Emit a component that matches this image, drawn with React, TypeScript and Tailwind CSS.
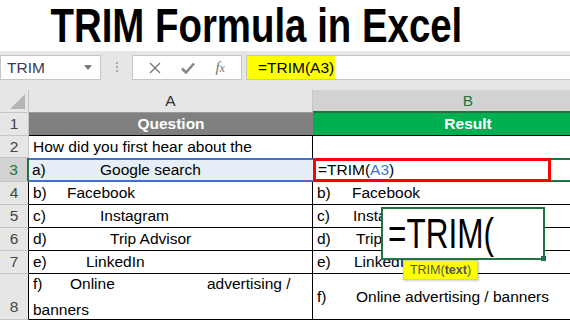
import React from "react";

const cellFont = { fontFamily: '"Liberation Sans", Arial, sans-serif' };

// one left/right item: label in a fixed-width slot, text after it
const Item = ({ label, w, text }: { label: string; w: string; text: string }) => (
  <div className="flex items-center whitespace-nowrap">
    <span className={w}>{label}</span>
    <span>{text}</span>
  </div>
);

const RowHead = ({
  n,
  border = "border-r-[#c6c6c6]",
  text = "text-[#444]",
  align = "items-center",
  bg = "bg-[#e6e6e6]",
}: {
  n: string;
  border?: string;
  text?: string;
  align?: string;
  bg?: string;
}) => (
  <div
    className={`flex w-[29px] shrink-0 justify-center border-b border-r border-b-[#c6c6c6] ${border} ${bg} ${text} ${align}`}
  >
    {n}
  </div>
);

export default function App() {
  return (
    <div
      className="relative h-[322px] w-[570px] overflow-hidden bg-white text-[15.5px] text-black"
      style={cellFont}
    >
      {/* title */}
      <div className="flex h-[51px] items-center justify-center pr-[57px]">
        <h1 className="scale-x-[0.8] whitespace-nowrap text-[48px] font-bold leading-none text-black">
          TRIM Formula in Excel
        </h1>
      </div>

      {/* formula bar */}
      <div className="flex h-[39px] items-start bg-[#e6e6e6] pt-[4px]">
        <div className="flex h-[25px] w-[101px] items-center justify-between border border-[#c6c6c6] bg-white pl-[6px] pr-[8px] text-[#3a3a55]">
          <span>TRIM</span>
          <svg width="8" height="5" viewBox="0 0 8 5">
            <path d="M0 0h8L4 5z" fill="#777" />
          </svg>
        </div>
        <div className="flex w-[31px] flex-col items-center gap-[2px] pt-[7px]">
          <span className="h-[2px] w-[2px] bg-[#aaa]" />
          <span className="h-[2px] w-[2px] bg-[#aaa]" />
          <span className="h-[2px] w-[2px] bg-[#aaa]" />
        </div>
        <div className="flex h-[25px] w-[110px] items-center justify-around border border-[#c6c6c6] bg-white px-[6px]">
          <svg width="12" height="12" viewBox="0 0 12 12">
            <path d="M1 1l10 10M11 1L1 11" stroke="#777" strokeWidth="1.4" />
          </svg>
          <svg width="14" height="12" viewBox="0 0 14 12">
            <path d="M1 6.5l4 4L13 1.5" stroke="#888" strokeWidth="2.6" fill="none" />
          </svg>
          <span className="text-[15px] italic text-[#777] [font-family:'Liberation_Serif',serif]">
            f<span className="text-[12px]">x</span>
          </span>
        </div>
        <div className="ml-[4px] flex h-[25px] flex-1 items-center border-y border-l border-[#c6c6c6] bg-white">
          <div className="flex h-full w-[88px] items-center bg-[#ffff00] pl-[11px]">=TRIM(A3)</div>
        </div>
      </div>

      {/* column headers */}
      <div className="flex h-[23px]">
        <div className="relative w-[29px] shrink-0 border-b border-r border-[#c6c6c6] bg-[#e6e6e6]">
          <svg className="absolute bottom-[3px] right-[3px]" width="15" height="15" viewBox="0 0 15 15">
            <path d="M15 0V15H0z" fill="#b5b5b5" />
          </svg>
        </div>
        <div className="flex w-[284px] shrink-0 items-center justify-center border-b border-r border-b-[#9b9b9b] border-r-[#c6c6c6] bg-[#e6e6e6] text-[#333]">
          A
        </div>
        <div className="flex w-[310px] shrink-0 items-center justify-center border-b-2 border-[#217346] bg-[#d2d2d2] text-[#217346]">
          B
        </div>
      </div>

      {/* row 1 */}
      <div className="flex h-[23px]">
        <RowHead n="1" />
        <div className="flex w-[284px] shrink-0 items-center justify-center border-b border-black bg-[#808080] font-bold text-white">
          Question
        </div>
        <div className="flex w-[310px] shrink-0 items-center justify-center border-b border-black bg-[#00b050] font-bold text-white">
          Result
        </div>
      </div>

      {/* row 2 */}
      <div className="flex h-[22px]">
        <RowHead n="2" />
        <div className="flex w-[284px] shrink-0 items-center whitespace-nowrap border-r border-black pl-[4px]">
          How did you first hear about the
        </div>
        <div className="w-[310px] shrink-0" />
      </div>

      {/* row 3 */}
      <div className="flex h-[24px]">
        <RowHead
          n="3"
          border="border-r-2 border-r-[#217346]"
          text="text-[#217346]"
          bg="bg-[#d2d2d2]"
        />
        <div className="flex w-[284px] shrink-0 items-center border-y-2 border-[#3f73c6] bg-[#e6eef8] pl-[3px]">
          <Item label="a)" w="w-[68px]" text="Google search" />
        </div>
        <div className="flex w-[310px] shrink-0">
          <div className="flex h-full w-[238px] items-center border-[3px] border-[#ff0000] pl-[2px]">
            =TRIM(<span className="text-[#4472c4]">A3</span>)
          </div>
          <div className="flex-1 border-y-2 border-[#217346]" />
        </div>
      </div>

      {/* rows 4 - 7 */}
      {[
        { n: "4", l: "b)", aw: "w-[34px]", a: "Facebook", bw: "w-[35px]", b: "Facebook" },
        { n: "5", l: "c)", aw: "w-[67px]", a: "Instagram", bw: "w-[36px]", b: "Instagram" },
        { n: "6", l: "d)", aw: "w-[77px]", a: "Trip Advisor", bw: "w-[39px]", b: "Trip Advisor" },
        { n: "7", l: "e)", aw: "w-[53px]", a: "LinkedIn", bw: "w-[37px]", b: "LinkedIn" },
      ].map((r) => (
        <div key={r.n} className="flex h-[23px]">
          <RowHead n={r.n} border="border-r-black" />
          <div className="flex w-[284px] shrink-0 items-center border-b border-r border-black pl-[4px]">
            <Item label={r.l} w={r.aw} text={r.a} />
          </div>
          <div className="flex w-[310px] shrink-0 items-center border-b border-black pl-[4px]">
            <Item label={r.l} w={r.bw} text={r.b} />
          </div>
        </div>
      ))}

      {/* row 8 */}
      <div className="flex h-[46px]">
        <RowHead n="8" border="border-r-black" align="items-end pb-[1px]" />
        <div className="flex w-[284px] shrink-0 flex-col justify-center gap-[3px] border-b border-r border-black pl-[4px]">
          <div className="flex whitespace-nowrap">
            <span className="w-[37px]">f)</span>
            <span className="w-[137px]">Online</span>
            <span>advertising /</span>
          </div>
          <div>banners</div>
        </div>
        <div className="flex w-[310px] shrink-0 items-center border-b border-black pl-[4px]">
          <Item label="f)" w="w-[39px]" text="Online advertising / banners" />
        </div>
      </div>

      {/* in-cell edit popup */}
      <div className="absolute left-[381px] top-[207px] flex h-[53px] w-[164px] items-center border-2 border-[#217346] bg-white pl-[5px]">
        <span className="origin-left scale-x-[0.75] whitespace-nowrap text-[42px] leading-none text-black">
          =TRIM(
        </span>
        <span className="absolute -bottom-[3px] -right-[3px] h-[5px] w-[5px] bg-[#217346]" />
      </div>

      {/* function tooltip */}
      <div className="absolute left-[403px] top-[260px] flex h-[20px] w-[75px] items-center justify-center border border-[#d0d0a0] bg-[#ffff00] text-[12.5px] text-[#555] shadow-[1px_1px_2px_rgba(0,0,0,0.2)]">
        TRIM(<span className="font-bold">text</span>)
      </div>
    </div>
  );
}
